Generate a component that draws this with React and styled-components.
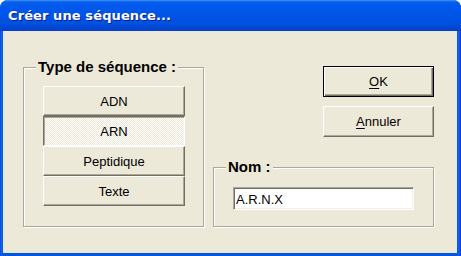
import React from 'react';
import styled, { createGlobalStyle } from 'styled-components';

const Global = createGlobalStyle`
  html, body {
    margin: 0;
    padding: 0;
    background: #ffffff;
  }
  #root {
    width: 461px;
    height: 256px;
  }
`;

const Window = styled.div`
  width: 461px;
  height: 256px;
  display: flex;
  flex-direction: column;
  box-sizing: border-box;
  border-radius: 8px 8px 0 0;
  overflow: hidden;
  background: linear-gradient(to right, #0831d9 0, #166aee 1px, #0055e5 3px, #0055e5 457px, #1a62ee 459px, #0831d9 461px);
  font-family: "Liberation Sans", Arial, sans-serif;
`;

const TitleBar = styled.div`
  height: 31px;
  flex: none;
  display: flex;
  align-items: center;
  padding: 0 8px 1px;
  box-sizing: border-box;
  background: linear-gradient(
    to bottom,
    #3d95ff 0,
    #0a5fe8 2px,
    #0058ee 6px,
    #0055e5 16px,
    #0050dd 24px,
    #0046d2 28px,
    #0a3cc4 31px
  );
  color: #ffffff;
  font-family: "DejaVu Sans", Verdana, sans-serif;
  font-weight: bold;
  font-size: 13px;
  letter-spacing: 0.1px;
  text-shadow: 1px 1px 0 #0a1c9c;
`;

const Body = styled.div`
  flex: 1;
  margin: 0 4px 3px 3px;
  background: #ece9d8;
  display: grid;
  grid-template-columns: 181px 221px;
  column-gap: 9px;
  align-items: stretch;
  align-content: start;
  padding: 27px 0 0 20px;
`;

const Group = styled.fieldset`
  margin: 0;
  box-sizing: border-box;
  min-inline-size: 0;
  border: 1px solid #aca899;
  box-shadow: inset 1px 1px 0 #ffffff, 1px 1px 0 #ffffff;
  padding: ${(p) => p.$pad};
  display: flex;
  flex-direction: column;
  align-items: flex-start;
`;

const Legend = styled.legend`
  margin-left: -7px;
  padding: 0 2px;
  font-family: "Liberation Sans", Arial, sans-serif;
  font-weight: bold;
  font-size: 15px;
  line-height: 18px;
  color: #000000;
  background: #ece9d8;
`;

const RadioButton = styled.button`
  width: 142px;
  height: 30px;
  box-sizing: border-box;
  margin: 0;
  padding: 0;
  font-family: "Liberation Sans", Arial, sans-serif;
  font-size: 13px;
  color: #000000;
  border: 1px solid;
  border-color: ${(p) => (p.$pressed ? '#716f64 #ffffff #ffffff #716f64' : '#ffffff #716f64 #716f64 #ffffff')};
  box-shadow: ${(p) => (p.$pressed ? 'inset 1px 1px 0 #aca899' : 'inset -1px -1px 0 #aca899')};
  background: ${(p) =>
    p.$pressed
      ? 'repeating-conic-gradient(#ffffff 0 25%, #ece9d8 0 50%) 0 0 / 2px 2px'
      : '#ece9d8'};
  cursor: default;
`;

const Side = styled.div`
  display: flex;
  flex-direction: column;
  align-items: flex-end;
`;

const PushButton = styled.button`
  width: 111px;
  height: 31px;
  box-sizing: border-box;
  margin: ${(p) => p.$mt} 0 0;
  padding: 0;
  font-family: "Liberation Sans", Arial, sans-serif;
  font-size: 13px;
  color: #000000;
  background: #ece9d8;
  border: 1px solid ${(p) => (p.$default ? '#000000' : 'transparent')};
  box-shadow: ${(p) =>
    p.$default
      ? 'inset 1px 1px 0 #ffffff, inset -1px -1px 0 #716f64, inset -2px -2px 0 #aca899'
      : 'inset -1px -1px 0 #aca899'};
  border-color: ${(p) => (p.$default ? '#000000' : '#ffffff #716f64 #716f64 #ffffff')};
  cursor: default;

  u {
    text-decoration: underline;
    text-underline-offset: 2px;
  }
`;

const NameGroup = styled(Group)`
  margin-top: auto;
  width: 221px;
`;

const TextInput = styled.input`
  width: 181px;
  height: 23px;
  box-sizing: border-box;
  margin: 0;
  padding: 1px 2px 0;
  font-family: "Liberation Sans", Arial, sans-serif;
  font-size: 13px;
  color: #000000;
  background: #ffffff;
  border: 1px solid;
  border-color: #aca899 #ffffff #ffffff #aca899;
  box-shadow: inset 1px 1px 0 #716f64, inset -1px -1px 0 #f1efe2;
  outline: none;
`;

const types = ['ADN', 'ARN', 'Peptidique', 'Texte'];

export default function App() {
  return (
    <>
      <Global />
      <Window>
        <TitleBar>Créer une séquence...</TitleBar>
        <Body>
          <Group $pad="10px 18px 20px 19px">
            <Legend>Type de séquence :</Legend>
            {types.map((t) => (
              <RadioButton key={t} $pressed={t === 'ARN'}>
                {t}
              </RadioButton>
            ))}
          </Group>
          <Side>
            <PushButton $default $mt="8px">
              <u>O</u>K
            </PushButton>
            <PushButton $mt="9px">
              <u>A</u>nnuler
            </PushButton>
            <NameGroup $pad="11px 19px 16px 19px">
              <Legend>Nom :</Legend>
              <TextInput defaultValue="A.R.N.X" readOnly />
            </NameGroup>
          </Side>
        </Body>
      </Window>
    </>
  );
}
